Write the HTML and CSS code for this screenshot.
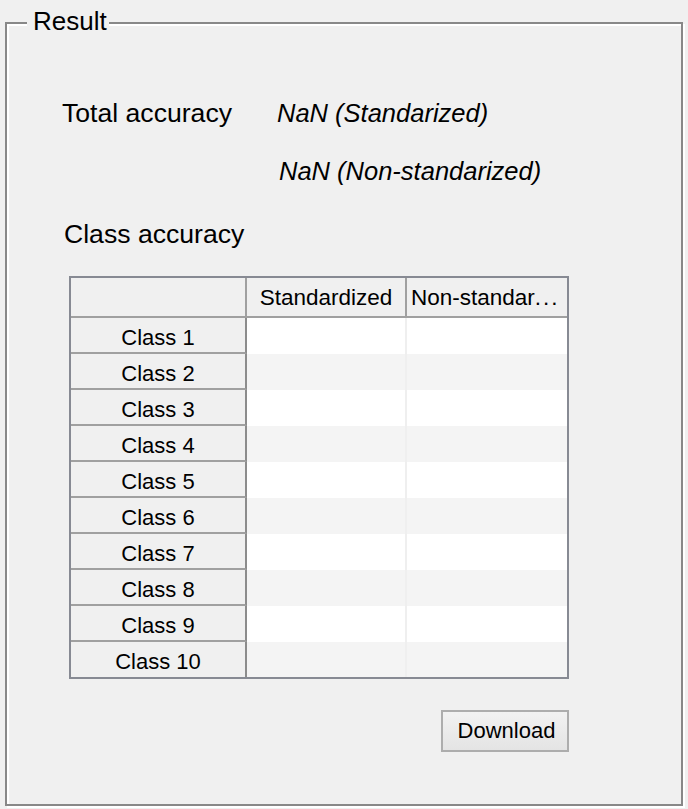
FILE: index.html
```html
<!DOCTYPE html>
<html>
<head>
<meta charset="utf-8">
<title>Result</title>
<link rel="stylesheet" href="styles.css">
</head>
<body>
<div class="group">
  <span class="legend">Result</span>
  <div class="totals">
    <span class="label">Total accuracy</span>
    <span class="value">NaN (Standarized)</span>
    <span></span>
    <span class="value second">NaN (Non-standarized)</span>
  </div>
  <div class="class-title">Class accuracy</div>
  <table class="grid">
    <thead>
      <tr>
        <th class="corner"></th>
        <th class="colhead">Standardized</th>
        <th class="colhead last">Non-standar<span class="dots">...</span></th>
      </tr>
    </thead>
    <tbody>
      <tr class="odd"><th class="rowhead">Class 1</th><td class="c1"></td><td class="c2"></td></tr>
      <tr class="even"><th class="rowhead">Class 2</th><td class="c1"></td><td class="c2"></td></tr>
      <tr class="odd"><th class="rowhead">Class 3</th><td class="c1"></td><td class="c2"></td></tr>
      <tr class="even"><th class="rowhead">Class 4</th><td class="c1"></td><td class="c2"></td></tr>
      <tr class="odd"><th class="rowhead">Class 5</th><td class="c1"></td><td class="c2"></td></tr>
      <tr class="even"><th class="rowhead">Class 6</th><td class="c1"></td><td class="c2"></td></tr>
      <tr class="odd"><th class="rowhead">Class 7</th><td class="c1"></td><td class="c2"></td></tr>
      <tr class="even"><th class="rowhead">Class 8</th><td class="c1"></td><td class="c2"></td></tr>
      <tr class="odd"><th class="rowhead">Class 9</th><td class="c1"></td><td class="c2"></td></tr>
      <tr class="even lastrow"><th class="rowhead">Class 10</th><td class="c1"></td><td class="c2"></td></tr>
    </tbody>
  </table>
  <button class="download" type="button">Download</button>
</div>
</body>
</html>
```
FILE: styles.css
```css
html, body {
  margin: 0;
  padding: 0;
  background: #f0f0f0;
}
body {
  font-family: "Liberation Sans", Arial, sans-serif;
  color: #000;
  height: 809px;
  overflow: hidden;
}
.group {
  position: relative;
  box-sizing: border-box;
  margin: 22px 0 0 5px;
  width: 678px;
  height: 784px;
  border: 2px solid #888888;
  box-shadow: inset 2px 2px 0 #ffffff, 2px 2px 0 #ffffff;
  padding-top: 74px;
}
.legend {
  position: absolute;
  top: -18px;
  left: 20px;
  padding: 0 2px 0 6px;
  background: #f0f0f0;
  font-size: 26px;
  line-height: 30px;
}
.totals {
  margin-left: 55px;
  display: grid;
  grid-template-columns: 215px auto;
  row-gap: 28px;
  font-size: 26.6px;
  line-height: 30px;
}
.value {
  font-style: italic;
  font-size: 25.5px;
}
.second {
  padding-left: 2px;
}
.class-title {
  margin: 33px 0 0 57px;
  font-size: 26.6px;
  line-height: 30px;
}
.grid {
  margin: 27px 0 0 62px;
  width: 500px;
  table-layout: fixed;
  border-collapse: separate;
  border-spacing: 0;
  border: 2px solid #878a93;
  font-size: 22.5px;
}
.grid th,
.grid td {
  box-sizing: border-box;
  padding: 0;
  font-weight: normal;
  vertical-align: top;
}
.grid .corner {
  width: 176px;
  background: #f0f0f0;
  border-right: 2px solid #a0a0a0;
  border-bottom: 2px solid #a0a0a0;
}
.grid .colhead {
  width: 160px;
  height: 40px;
  background: #f0f0f0;
  border-right: 2px solid #a0a0a0;
  border-bottom: 2px solid #a0a0a0;
  padding: 8px 0 0 0;
  line-height: 24px;
  text-align: center;
  white-space: nowrap;
  overflow: hidden;
}
.grid .colhead.last {
  border-right: none;
  text-align: left;
  padding-left: 4px;
}
.dots {
  letter-spacing: 2px;
}
.grid .rowhead {
  height: 36px;
  background: #f0f0f0;
  border-right: 2px solid #8c8c8c;
  border-bottom: 2px solid #a0a0a0;
  font-size: 22px;
  line-height: 24px;
  padding: 8px 0 0 0;
  text-align: center;
}
.grid .lastrow .rowhead {
  border-bottom: none;
  height: 35px;
}
.grid .c1 {
  border-right: 2px solid #efefef;
}
.odd td {
  background: #ffffff;
}
.even td {
  background: #f4f4f4;
}
.download {
  display: block;
  margin: 31px 0 0 434px;
  width: 128px;
  height: 42px;
  box-sizing: border-box;
  border: 2px solid #adadad;
  border-radius: 0;
  background: linear-gradient(#f2f2f2, #e4e4e4);
  font-family: "Liberation Sans", Arial, sans-serif;
  font-size: 22px;
  color: #000;
  padding: 0 0 0 3px;
}
```
